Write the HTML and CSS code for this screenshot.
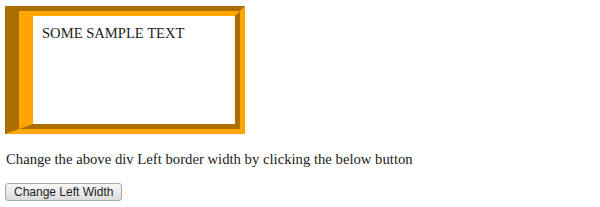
FILE: index.html
```html
<!DOCTYPE html>
<html lang="en">
<head>
    <meta charset="utf-8">
    <title>Border left width</title>
    <link rel="stylesheet" href="styles.css">
</head>
<body>

    <div id="demo" class="box">SOME SAMPLE TEXT</div>

    <p class="info">Change the above div Left border width by clicking the below button</p>

    <button id="changeBtn" class="change-button">Change Left Width</button>

</body>
</html>
```

FILE: styles.css
```css
body {
    margin: 0;
    padding: 6px 5px;
    background-color: #fff;
    color: #222;
    font-family: "Liberation Serif", "Times New Roman", serif;
    font-size: 14.7px;
}

/* groove border, wide on the left */
.box {
    width: 184px;
    height: 90px;
    padding: 9px;
    border: 10px groove orange;
    border-left-width: 28px;
    font-size: 14.6px;
}

.info {
    margin: 17px 0 0 1px;
    line-height: 17px;
}

.change-button {
    margin-top: 15px;
    height: 18px;
    padding: 0 8px;
    font-family: "Liberation Sans", Arial, sans-serif;
    font-size: 12px;
    line-height: 16px;
    color: #222;
    background: linear-gradient(#f7f7f7, #dcdcdc);
    border: 1px solid #a9a9a9;
    border-radius: 3px;
}
```
